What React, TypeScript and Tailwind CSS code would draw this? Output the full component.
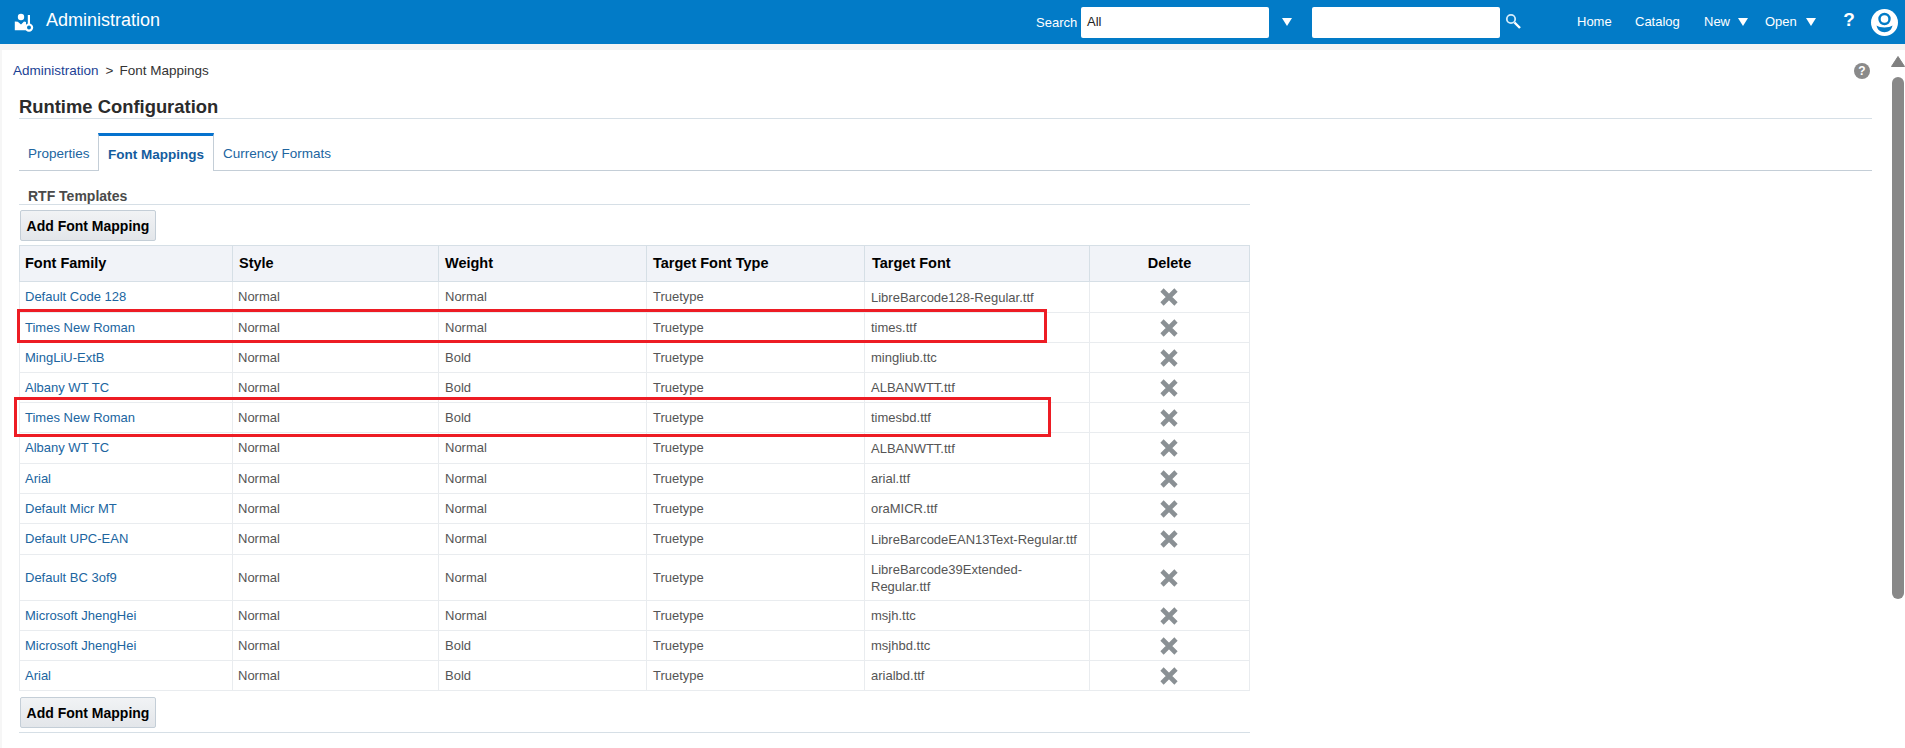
const rows = [
  { family: 'Default Code 128', weight: 'Normal', font: 'LibreBarcode128-Regular.ttf', h: 'h-[31px]' },
  { family: 'Times New Roman', weight: 'Normal', font: 'times.ttf', h: 'h-[30px]' },
  { family: 'MingLiU-ExtB', weight: 'Bold', font: 'mingliub.ttc', h: 'h-[30px]' },
  { family: 'Albany WT TC', weight: 'Bold', font: 'ALBANWTT.ttf', h: 'h-[30px]' },
  { family: 'Times New Roman', weight: 'Bold', font: 'timesbd.ttf', h: 'h-[30px]' },
  { family: 'Albany WT TC', weight: 'Normal', font: 'ALBANWTT.ttf', h: 'h-[31px]' },
  { family: 'Arial', weight: 'Normal', font: 'arial.ttf', h: 'h-[30px]' },
  { family: 'Default Micr MT', weight: 'Normal', font: 'oraMICR.ttf', h: 'h-[30px]' },
  { family: 'Default UPC-EAN', weight: 'Normal', font: 'LibreBarcodeEAN13Text-Regular.ttf', h: 'h-[31px]' },
  { family: 'Default BC 3of9', weight: 'Normal', font: 'LibreBarcode39Extended-\nRegular.ttf', h: 'h-[46px]' },
  { family: 'Microsoft JhengHei', weight: 'Normal', font: 'msjh.ttc', h: 'h-[30px]' },
  { family: 'Microsoft JhengHei', weight: 'Bold', font: 'msjhbd.ttc', h: 'h-[30px]' },
  { family: 'Arial', weight: 'Bold', font: 'arialbd.ttf', h: 'h-[30px]' },
];

function Caret() {
  return (
    <svg width="10" height="8" viewBox="0 0 10 8" className="shrink-0">
      <path d="M0 0h10L5 8z" fill="#fff" />
    </svg>
  );
}

function AdminIcon() {
  return (
    <svg width="20" height="20" viewBox="0 0 20 20" className="shrink-0">
      <circle cx="7" cy="5" r="3.2" fill="#fff" />
      <path d="M0.8 9.5l3 .2L7 12.6l3-3 2 .4v3.2a5 5 0 0 0 .3 5H0.8z" fill="#fff" />
      <rect x="13.8" y="3" width="2.2" height="9" fill="#fff" />
      <circle cx="15" cy="15.6" r="3.1" fill="none" stroke="#fff" strokeWidth="2.2" />
    </svg>
  );
}

function AddButton() {
  return (
    <button className="ml-px h-[31px] w-[136px] rounded-[2px] border border-[#c4ced7] bg-gradient-to-b from-[#f1f3f5] to-[#e3e6ea] pt-px text-[14px] font-bold text-black">
      Add Font Mapping
    </button>
  );
}

function DeleteIcon() {
  return (
    <svg width="18" height="18" viewBox="0 0 18 18" className="mx-auto block -translate-x-px">
      <path d="M2 2l14 14M16 2L2 16" stroke="#8a9094" strokeWidth="4.6" />
    </svg>
  );
}

export default function App() {
  return (
    <div className="flex h-[748px] w-[1905px] flex-col overflow-hidden bg-white font-['Liberation_Sans',Arial,sans-serif] text-[13px]">
      <header className="flex h-[44px] shrink-0 items-center bg-[#027bc7] pl-[14px] pr-[7px] text-white">
        <AdminIcon />
        <span className="ml-3 mb-[3px] text-[18px]">Administration</span>
        <div className="ml-auto flex items-center">
          <span className="mt-px w-[41px]">Search</span>
          <div className="ml-1 flex h-[31px] w-[188px] items-center rounded-[2px] bg-white pl-[6px] text-[#222]">All</div>
          <div className="ml-[13px]"><Caret /></div>
          <div className="ml-[20px] h-[31px] w-[188px] rounded-[2px] bg-white" />
          <svg width="16" height="16" viewBox="0 0 16 16" className="mb-[3px] ml-[5px] shrink-0">
            <circle cx="6" cy="6" r="4.2" fill="none" stroke="#d5ecfa" strokeWidth="1.8" />
            <path d="M9.5 9.5L15 15" stroke="#fff" strokeWidth="2.4" />
          </svg>
          <span className="ml-[56px] w-[35px]">Home</span>
          <span className="ml-[23px] w-[45px]">Catalog</span>
          <span className="ml-[24px] w-[27px]">New</span>
          <div className="ml-[7px]"><Caret /></div>
          <span className="ml-[17px] w-[32px]">Open</span>
          <div className="ml-[9px]"><Caret /></div>
          <span className="mb-[3px] ml-[27px] w-[12px] text-center text-[19px] font-bold">?</span>
          <svg width="27" height="27" viewBox="0 0 27 27" className="ml-[16px] shrink-0">
            <circle cx="13.5" cy="13.5" r="13.5" fill="#fff" />
            <circle cx="13.5" cy="10" r="5" fill="none" stroke="#027bc7" strokeWidth="2.4" />
            <path d="M5.5 16.5c3 2.6 13 2.6 16 0-1 4.6-4 6.7-8 6.7s-7-2.1-8-6.7z" fill="#027bc7" />
          </svg>
        </div>
      </header>
      <div className="h-[6px] shrink-0 bg-[#f4f4f4]" />

      <div className="flex min-h-0 flex-1">
        <main className="min-w-0 flex-1 border-l-2 border-[#f6f6f6] pl-[17px]">
          <div className="mt-[11px] flex h-[20px] items-center pr-[21px] text-[13.5px]">
            <a className="ml-[-6px] text-[#1c3f94]">Administration</a>
            <span className="ml-[7px] text-[#333]">&gt;</span>
            <span className="ml-[6px] text-[#333]">Font Mappings</span>
            <span className="ml-auto flex h-4 w-4 items-center justify-center rounded-full bg-[#8a8a8a] text-[12px] font-bold text-white">?</span>
          </div>

          <div className="mr-[19px] mt-[13px] h-[25px] border-b border-[#d6dfe6]">
            <h1 className="pt-px text-[18.4px] font-bold leading-[24px] text-[#2b2b2b]">Runtime Configuration</h1>
          </div>

          <div className="mr-[19px] mt-[14px] flex h-[38px] border-b border-[#c4ced7] text-[13.5px] text-[#20659f]">
            <div className="flex h-[37px] w-[79px] items-center pl-[9px] pt-[6px]">Properties</div>
            <div className="-mb-px flex h-[38px] w-[116px] items-center border-x border-t-[3px] border-x-[#c4ced7] border-t-[#0572ce] bg-white pl-[9px] pt-[4px] font-bold text-[#145c9e]">Font Mappings</div>
            <div className="flex h-[37px] items-center pl-[9px] pt-[6px]">Currency Formats</div>
          </div>

          <div className="w-[1231px]">
            <div className="h-[34px] border-b border-[#d6dfe6] pl-[9px] pt-[17px] text-[14px] font-bold leading-[16px] text-[#4a4a4a]">RTF Templates</div>
            <div className="mt-[5px]"><AddButton /></div>

            <div className="relative mt-[4px]">
              <table className="w-[1231px] table-fixed border-collapse">
                <thead>
                  <tr className="h-[36px] bg-[#f1f3f8] text-left text-[14.5px] text-black">
                    <th className="w-[213px] border border-[#d6dfe6] pl-[5px]">Font Family</th>
                    <th className="w-[206px] border border-[#d6dfe6] pl-[6px]">Style</th>
                    <th className="w-[208px] border border-[#d6dfe6] pl-[6px]">Weight</th>
                    <th className="w-[218px] border border-[#d6dfe6] pl-[6px]">Target Font Type</th>
                    <th className="w-[225px] border border-[#d6dfe6] pl-[7px]">Target Font</th>
                    <th className="border border-[#d6dfe6] text-center">Delete</th>
                  </tr>
                </thead>
                <tbody className="text-[#555]">
                  {rows.map((r, i) => (
                    <tr key={i} className={r.h}>
                      <td className="border border-[#e9ecef] pl-[5px] text-[#20659f]">{r.family}</td>
                      <td className="border border-[#e9ecef] pl-[5px]">Normal</td>
                      <td className="border border-[#e9ecef] pl-[6px]">{r.weight}</td>
                      <td className="border border-[#e9ecef] pl-[6px]">Truetype</td>
                      <td className="whitespace-pre-line border border-[#e9ecef] pl-[6px] leading-[17px]">{r.font}</td>
                      <td className="border border-[#e9ecef]"><DeleteIcon /></td>
                    </tr>
                  ))}
                </tbody>
              </table>
              <div className="absolute left-[-2px] top-[64px] h-[34px] w-[1030px] border-[3px] border-[#ed1c24]" />
              <div className="absolute left-[-5px] top-[152px] h-[40px] w-[1037px] border-[3px] border-[#ed1c24]" />
            </div>

            <div className="mt-[6px]"><AddButton /></div>
            <div className="mt-[4px] border-b border-[#d6dfe6]" />
          </div>
        </main>

        <div className="flex w-[14px] shrink-0 flex-col items-center pt-[6px]">
          <svg width="14" height="11" viewBox="0 0 14 11">
            <path d="M7 0.5L13.5 10.5H0.5z" fill="#808080" stroke="#808080" strokeLinejoin="round" />
          </svg>
          <div className="mt-[10px] h-[522px] w-[12px] rounded-t-[6px] rounded-b-[6px] bg-[#888]" />
        </div>
      </div>
    </div>
  );
}
